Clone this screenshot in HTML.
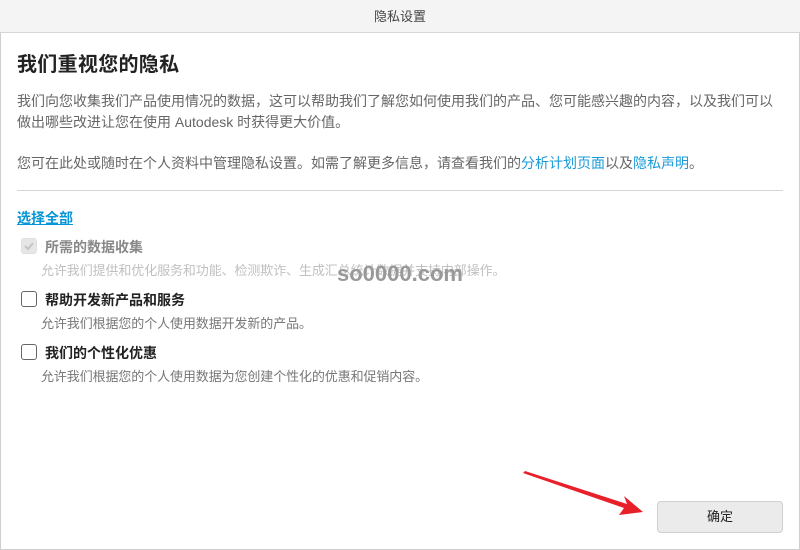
<!DOCTYPE html>
<html><head><meta charset="utf-8"><style>
*{margin:0;padding:0;box-sizing:border-box}
body{width:800px;height:550px;background:#fff;font-family:"Liberation Sans","Noto Sans CJK SC",sans-serif;position:relative;overflow:hidden}
.frame{position:absolute;left:0;top:0;width:800px;height:550px;border:1px solid #cfcfcf;border-top:none}
.hdr{position:absolute;left:0;top:0;width:800px;height:33px;background:#f4f4f4;border-bottom:1px solid #d6d6d6;text-align:center;font-size:13px;line-height:33px;color:#444}
.t{position:absolute;white-space:nowrap}
h1{position:absolute;left:17px;top:48px;font-size:20px;font-weight:bold;color:#222;letter-spacing:.3px}
.p{position:absolute;left:17px;font-size:14px;color:#666;letter-spacing:0px;line-height:21px;white-space:nowrap}
.blue{color:#1a9ad8}
.hr{position:absolute;left:17px;top:190px;width:766px;height:1px;background:#d4d4d4}
.sel{left:17px;top:208px;font-size:14px;font-weight:bold;color:#0696d7;text-decoration:underline}
.cb{position:absolute;left:21px;width:16px;height:16px;border:1px solid #666;border-radius:3px;background:#fff}
.lab{left:45px;font-size:14px;font-weight:bold;color:#222}
.desc{left:41px;font-size:13px;color:#777;letter-spacing:-0.1px}
.btn{position:absolute;left:657px;top:501px;width:126px;height:32px;background:#ebebeb;border:1px solid #d0d0d0;border-radius:4px;text-align:center;line-height:30px;font-size:13px;color:#222}
</style></head><body>
<div class="frame"></div>
<div class="hdr">隐私设置</div>
<h1>我们重视您的隐私</h1>
<div class="p" style="top:91px">我们向您收集我们产品使用情况的数据，这可以帮助我们了解您如何使用我们的产品、您可能感兴趣的内容，以及我们可以<br>做出哪些改进让您在使用 Autodesk 时获得更大价值。</div>
<div class="p" style="top:153px">您可在此处或随时在个人资料中管理隐私设置。如需了解更多信息，请查看我们的<span class="blue">分析计划页面</span>以及<span class="blue">隐私声明</span>。</div>
<div class="hr"></div>
<div class="t sel">选择全部</div>
<div class="cb" style="top:238px;background:#e6e6e6;border-color:#e0e0e0"><svg width="14" height="14" viewBox="0 0 14 14" style="position:absolute;left:0;top:0"><path d="M3 7l3 3 5-6" stroke="#c4c4c4" stroke-width="2" fill="none"/></svg></div>
<div class="t lab" style="top:237px;color:#888">所需的数据收集</div>
<div class="t desc" style="top:260px;color:#c0c0c0">允许我们提供和优化服务和功能、检测欺诈、生成汇总统计数据并支持内部操作。</div>
<div class="t" style="left:337px;top:261px;font-size:22px;font-weight:bold;color:#999">so0000.com</div>
<div class="cb" style="top:291px"></div>
<div class="t lab" style="top:290px">帮助开发新产品和服务</div>
<div class="t desc" style="top:313px">允许我们根据您的个人使用数据开发新的产品。</div>
<div class="cb" style="top:344px"></div>
<div class="t lab" style="top:343px">我们的个性化优惠</div>
<div class="t desc" style="top:366px">允许我们根据您的个人使用数据为您创建个性化的优惠和促销内容。</div>
<svg style="position:absolute;left:0;top:0" width="800" height="550"><path d="M525 471 L627 504 L624 496 L643 512 L619 515 L624 508 L523 473Z" fill="#e8202a"/></svg>
<div class="btn">确定</div>
</body></html>
